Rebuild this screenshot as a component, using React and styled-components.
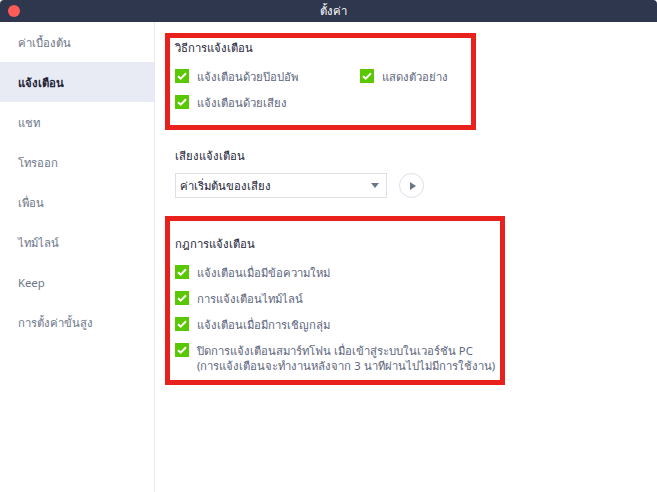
import styled, { createGlobalStyle } from "styled-components";

const menuItems = ["ค่าเบื้องต้น", "แจ้งเตือน", "แชท", "โทรออก", "เพื่อน", "ไทม์ไลน์", "Keep", "การตั้งค่าขั้นสูง"];

function Check({ children }) {
  return (
    <CheckRow>
      <CheckBox>
        <svg width="10" height="8" viewBox="0 0 10 8">
          <path d="M1 4.2 L3.7 6.6 L9 1.2" fill="none" stroke="#fff" strokeWidth="2" />
        </svg>
      </CheckBox>
      <CheckLabel>{children}</CheckLabel>
    </CheckRow>
  );
}

export default function App() {
  return (
    <Window>
      <GlobalStyle />
      <TitleBar>
        <CloseDot />
        <Title>ตั้งค่า</Title>
      </TitleBar>
      <Body>
        <Sidebar>
          {menuItems.map((item, i) => (
            <MenuItem key={item} $active={i === 1}>
              {item}
            </MenuItem>
          ))}
        </Sidebar>
        <Content>
          <MethodBox>
            <Heading>วิธีการแจ้งเตือน</Heading>
            <MethodGrid>
              <Check>แจ้งเตือนด้วยป๊อปอัพ</Check>
              <Check>แสดงตัวอย่าง</Check>
              <Check>แจ้งเตือนด้วยเสียง</Check>
            </MethodGrid>
          </MethodBox>
          <SoundSection>
            <Heading>เสียงแจ้งเตือน</Heading>
            <SoundRow>
              <Select>
                ค่าเริ่มต้นของเสียง
                <Caret />
              </Select>
              <PlayButton>
                <svg width="6" height="8" viewBox="0 0 6 8">
                  <path d="M0 0 L6 4 L0 8 Z" fill="#6d7689" />
                </svg>
              </PlayButton>
            </SoundRow>
          </SoundSection>
          <RulesBox>
            <Heading>กฎการแจ้งเตือน</Heading>
            <RulesList>
              <Check>แจ้งเตือนเมื่อมีข้อความใหม่</Check>
              <Check>การแจ้งเตือนไทม์ไลน์</Check>
              <Check>แจ้งเตือนเมื่อมีการเชิญกลุ่ม</Check>
              <Check>
                ปิดการแจ้งเตือนสมาร์ทโฟน เมื่อเข้าสู่ระบบในเวอร์ชัน PC
                <br />
                (การแจ้งเตือนจะทำงานหลังจาก 3 นาทีผ่านไปไม่มีการใช้งาน)
              </Check>
            </RulesList>
          </RulesBox>
        </Content>
      </Body>
    </Window>
  );
}

const GlobalStyle = createGlobalStyle`
  html, body {
    margin: 0;
    background: #ffffff;
  }
  body {
    font-family: "Noto Sans", "Liberation Sans", "DejaVu Sans", sans-serif;
    font-size: 11.3px;
  }
`;

const Window = styled.div`
  width: 657px;
  height: 492px;
  display: flex;
  flex-direction: column;
  overflow: hidden;
  border-radius: 4px 4px 0 0;
  background: #ffffff;
`;

const TitleBar = styled.div`
  height: 22px;
  flex: none;
  display: flex;
  align-items: center;
  justify-content: center;
  position: relative;
  background: #2f374e;
`;

const CloseDot = styled.span`
  position: absolute;
  left: 8px;
  top: 5px;
  width: 12px;
  height: 12px;
  border-radius: 50%;
  background: #fc5b57;
`;

const Title = styled.div`
  margin-left: 9px;
  color: #ffffff;
  font-size: 11.3px;
  line-height: 22px;
`;

const Body = styled.div`
  flex: 1;
  display: flex;
`;

const Sidebar = styled.nav`
  width: 154px;
  flex: none;
  box-sizing: content-box;
  border-right: 1px solid #e6e9f1;
`;

const MenuItem = styled.div`
  height: 40px;
  box-sizing: border-box;
  padding: 1px 0 0 18px;
  display: flex;
  align-items: center;
  font-size: 11.3px;
  line-height: 15px;
  font-weight: ${(p) => (p.$active ? 600 : 400)};
  color: ${(p) => (p.$active ? "#1e2437" : "#6d7689")};
  background: ${(p) => (p.$active ? "#e8ebf3" : "transparent")};
`;

const Content = styled.main`
  flex: 1;
  padding: 11px 0 0 10px;
  display: flex;
  flex-direction: column;
  align-items: flex-start;
`;

const Heading = styled.div`
  height: 20px;
  line-height: 20px;
  font-size: 11.3px;
  color: #1e2437;
`;

const RedBox = styled.section`
  box-sizing: border-box;
  border: 5px solid #e8211c;
  padding-left: 5px;
`;

const MethodBox = styled(RedBox)`
  width: 311px;
  height: 97px;
  padding-top: 0;
`;

const MethodGrid = styled.div`
  display: grid;
  grid-template-columns: 185px 1fr;
  row-gap: 11px;
  margin-top: 11px;
`;

const SoundSection = styled.section`
  margin: 16px 0 0 10px;
`;

const SoundRow = styled.div`
  display: flex;
  align-items: center;
  gap: 12px;
  margin-top: 7px;
`;

const Select = styled.div`
  width: 212px;
  height: 25px;
  box-sizing: border-box;
  border: 1px solid #dcdfe8;
  padding-left: 4px;
  display: flex;
  align-items: center;
  justify-content: space-between;
  font-size: 11.3px;
  color: #1e2437;
`;

const Caret = styled.span`
  width: 0;
  height: 0;
  margin-right: 7px;
  border-left: 4px solid transparent;
  border-right: 4px solid transparent;
  border-top: 5px solid #6d7689;
`;

const PlayButton = styled.div`
  width: 25px;
  height: 25px;
  box-sizing: border-box;
  border: 1px solid #dcdfe8;
  border-radius: 50%;
  display: flex;
  align-items: center;
  justify-content: center;
  padding-left: 2px;
`;

const RulesBox = styled(RedBox)`
  width: 340px;
  height: 169px;
  margin-top: 18px;
  padding-top: 13px;
`;

const RulesList = styled.div`
  display: flex;
  flex-direction: column;
  gap: 11px;
  margin-top: 11px;
`;

const CheckRow = styled.div`
  display: flex;
  align-items: flex-start;
  gap: 8px;
`;

const CheckBox = styled.span`
  width: 14px;
  height: 14px;
  flex: none;
  display: flex;
  align-items: center;
  justify-content: center;
  background: #5ac800;
`;

const CheckLabel = styled.div`
  font-size: 11.3px;
  line-height: 15px;
  color: #5d667c;
  white-space: nowrap;
`;
